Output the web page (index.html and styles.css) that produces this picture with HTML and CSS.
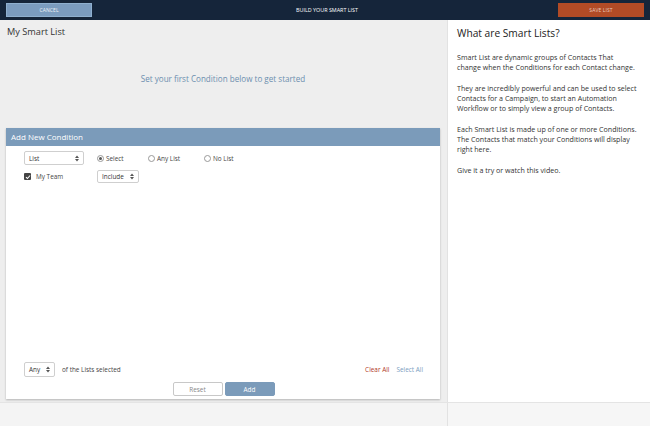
FILE: index.html
```html
<!DOCTYPE html>
<html>
<head>
<meta charset="utf-8">
<link rel="stylesheet" href="styles.css">
</head>
<body>
<div class="page">
  <header class="topbar">
    <button class="btn-top btn-cancel">CANCEL</button>
    <div class="topbar-title">BUILD YOUR SMART LIST</div>
    <button class="btn-top btn-save">SAVE LIST</button>
  </header>
  <div class="main">
    <section class="left">
      <h1 class="list-name">My Smart List</h1>
      <div class="empty-msg">Set your first Condition below to get started</div>
      <div class="card">
        <div class="card-head">Add New Condition</div>
        <div class="card-body">
          <div class="row row-1">
            <div class="sel sel-list"><span>List</span><svg class="arr" viewBox="0 0 4 7" width="4" height="7"><path d="M0 3L2 0.5L4 3Z M0 4L2 6.5L4 4Z" fill="#555"/></svg></div>
            <label class="radio radio-1"><span class="dot on"></span>Select</label>
            <label class="radio radio-2"><span class="dot"></span>Any List</label>
            <label class="radio radio-3"><span class="dot"></span>No List</label>
          </div>
          <div class="row row-2">
            <label class="check"><span class="box"><svg viewBox="0 0 8 8" width="6" height="6"><path d="M1.3 4.2L3.2 6L6.8 2" stroke="#fff" stroke-width="1.4" fill="none"/></svg></span>My Team</label>
            <div class="sel sel-include"><span>Include</span><svg class="arr" viewBox="0 0 4 7" width="4" height="7"><path d="M0 3L2 0.5L4 3Z M0 4L2 6.5L4 4Z" fill="#555"/></svg></div>
          </div>
          <div class="spacer"></div>
          <div class="row row-bottom">
            <div class="sel sel-any"><span>Any</span><svg class="arr" viewBox="0 0 4 7" width="4" height="7"><path d="M0 3L2 0.5L4 3Z M0 4L2 6.5L4 4Z" fill="#555"/></svg></div>
            <span class="of-text">of the Lists selected</span>
            <span class="grow"></span>
            <a class="link-clear">Clear All</a>
            <a class="link-select">Select All</a>
          </div>
          <div class="actions">
            <button class="btn btn-reset">Reset</button>
            <button class="btn btn-add">Add</button>
          </div>
        </div>
      </div>
    </section>
    <aside class="right">
      <h2 class="help-title">What are Smart Lists?</h2>
      <p>Smart List are dynamic groups of Contacts That<br>change when the Conditions for each Contact change.</p>
      <p>They are incredibly powerful and can be used to select<br>Contacts for a Campaign, to start an Automation<br>Workflow or to simply view a group of Contacts.</p>
      <p>Each Smart List is made up of one or more Conditions.<br>The Contacts that match your Conditions will display<br>right here.</p>
      <p>Give it a try or watch this video.</p>
    </aside>
  </div>
  <footer class="foot">
    <div class="foot-left"></div>
    <div class="foot-right"></div>
  </footer>
</div>
</body>
</html>
```
FILE: styles.css
```css
* { box-sizing: border-box; }
html, body { margin: 0; padding: 0; }
body {
  width: 650px;
  height: 426px;
  overflow: hidden;
  font-family: "Open Sans", "Liberation Sans", sans-serif;
  color: #333;
  background: #f5f5f5;
}
.page { display: flex; flex-direction: column; height: 426px; }

.topbar {
  height: 20px;
  background: #15253a;
  display: flex;
  align-items: center;
  justify-content: space-between;
  padding: 0 6px;
  flex: none;
}
.btn-top {
  width: 86px;
  height: 14px;
  border: none;
  padding: 0;
  font-family: inherit;
  font-size: 5px;
  color: #eef2f6;
  letter-spacing: 0.1px;
}
.btn-cancel { background: #7b9cbf; border: 1px solid #8fb0cf; }
.btn-save { background: #b24b26; color: #e9c9bd; }
.topbar-title {
  color: #fff;
  font-size: 5.4px;
  font-weight: 400;
  margin-left: 4px;
}

.main { display: flex; height: 382px; flex: none; }
.left {
  width: 447px;
  background: #eeeeee;
  display: flex;
  flex-direction: column;
  padding: 0 7px 3px 6px;
}
.list-name {
  margin: 6px 0 0 1px;
  font-size: 9.2px;
  line-height: 12px;
  font-weight: 400;
  color: #333;
}
.empty-msg {
  height: 90px;
  display: flex;
  align-items: center;
  justify-content: center;
  font-size: 8.1px;
  color: #6d8eaf;
  padding-bottom: 10px;
}
.card {
  flex: 1;
  display: flex;
  flex-direction: column;
  background: #fff;
  box-shadow: 0 1px 2px rgba(0,0,0,0.25);
}
.card-head {
  height: 18px;
  background: #7b9bba;
  color: #fff;
  font-size: 8px;
  line-height: 18px;
  padding-left: 5px;
}
.card-body {
  flex: 1;
  display: flex;
  flex-direction: column;
  padding: 5px 17px 3px 18px;
}
.row { display: flex; align-items: center; font-size: 6.4px; color: #444; }
.row-1 { height: 14px; }
.row-2 { height: 13px; margin-top: 5px; }
.sel {
  display: flex;
  align-items: center;
  justify-content: space-between;
  background: #fff;
  border: 1px solid #cfcfcf;
  border-radius: 2px;
  padding: 0 4px 0 4px;
  font-size: 6.4px;
  color: #333;
}
.sel-list { width: 60px; height: 14px; }
.sel-include { width: 42px; height: 13px; }
.sel-any { width: 31px; height: 15px; }
.radio { display: flex; align-items: center; }
.radio-1 { margin-left: 13px; width: 51px; }
.radio-2 { width: 56px; }
.dot {
  width: 7px;
  height: 7px;
  border: 1px solid #999;
  border-radius: 50%;
  margin-right: 2px;
  position: relative;
  background: #fff;
}
.dot.on::after {
  content: "";
  position: absolute;
  left: 1px;
  top: 1px;
  width: 3px;
  height: 3px;
  border-radius: 50%;
  background: #555;
}
.check { display: flex; align-items: center; width: 73px; }
.box {
  width: 7px;
  height: 7px;
  background: #444;
  border-radius: 1px;
  display: flex;
  align-items: center;
  justify-content: center;
  margin-right: 5px;
}
.spacer { flex: 1; }
.row-bottom { height: 15px; }
.of-text { margin-left: 7px; }
.grow { flex: 1; }
.link-clear { color: #b0391f; }
.link-select { color: #7a9cc0; margin-left: 7px; }
.actions {
  display: flex;
  justify-content: center;
  gap: 2px;
  margin-top: 5px;
}
.btn {
  width: 50px;
  height: 14px;
  font-family: inherit;
  font-size: 6.4px;
  padding: 0;
  border-radius: 2px;
}
.btn-reset { background: #fff; border: 1px solid #c8c8c8; color: #888; }
.btn-add { background: #7b9bba; border: 1px solid #7b9bba; color: #fff; }

.right {
  flex: 1;
  background: #fff;
  border-left: 1px solid #e2e2e2;
  padding: 0 2px 0 9px;
}
.help-title {
  margin: 6px 0 12px;
  font-size: 10.2px;
  line-height: 14px;
  font-weight: 400;
  color: #222;
}
.right p {
  margin: 0 0 11px;
  font-size: 7.1px;
  line-height: 10px;
  color: #333;
  white-space: nowrap;
}

.foot {
  flex: 1;
  display: flex;
  border-top: 1px solid #e4e4e4;
}
.foot-left { width: 447px; background: #f4f4f4; }
.foot-right { flex: 1; background: #f6f6f6; border-left: 1px solid #e2e2e2; }
```
